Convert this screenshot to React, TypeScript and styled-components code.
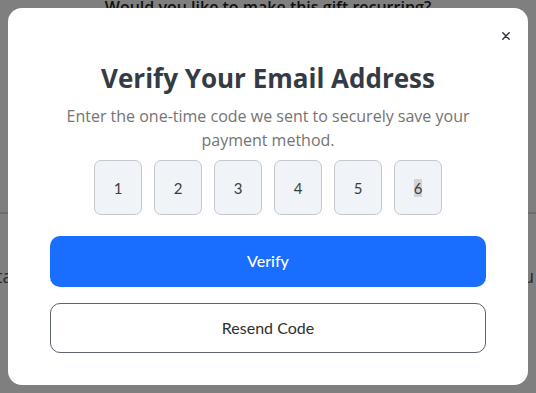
import styled, { createGlobalStyle } from "styled-components";

const GlobalStyle = createGlobalStyle`
  html, body {
    margin: 0;
    padding: 0;
  }
  body {
    font-family: "Open Sans", "Liberation Sans", sans-serif;
    background: #ffffff;
  }
  * {
    box-sizing: border-box;
  }
`;

const codeDigits = ["1", "2", "3", "4", "5", "6"];

const App = () => {
  return (
    <>
      <GlobalStyle />
      <Page>
        <BackHeading>Would you like to make this gift recurring?</BackHeading>
        <BackDivider />
        <BackText>
          <span>ta</span>
          <span>u</span>
        </BackText>
      </Page>
      <Overlay>
        <Modal>
          <CloseButton aria-label="Close">
            <svg width="8" height="8" viewBox="0 0 10 10">
              <path
                d="M1 1 L9 9 M9 1 L1 9"
                stroke="#2f3640"
                strokeWidth="1.8"
                strokeLinecap="round"
              />
            </svg>
          </CloseButton>
          <Title>Verify Your Email Address</Title>
          <Subtitle>
            Enter the one-time code we sent to securely save your payment
            method.
          </Subtitle>
          <CodeRow>
            {codeDigits.map((digit, i) => (
              <CodeBox key={digit}>
                <Digit selected={i === codeDigits.length - 1}>{digit}</Digit>
              </CodeBox>
            ))}
          </CodeRow>
          <Actions>
            <PrimaryButton>Verify</PrimaryButton>
            <SecondaryButton>Resend Code</SecondaryButton>
          </Actions>
        </Modal>
      </Overlay>
    </>
  );
};

export default App;

const Page = styled("div")`
  width: 536px;
  height: 393px;
  overflow: hidden;
  background: #fff;
  display: flex;
  flex-direction: column;
`;

const BackHeading = styled("h2")`
  margin: -3px 0 0;
  text-align: center;
  font-size: 16px;
  font-weight: 600;
  color: #1e1e1e;
  line-height: 20px;
`;

const BackDivider = styled("div")`
  margin-top: 195px;
  height: 2px;
  background: #d8d8d8;
`;

const BackText = styled("div")`
  margin-top: 50px;
  display: flex;
  justify-content: space-between;
  font-size: 18px;
  line-height: 24px;
  color: #555;
  margin-left: -4px;
  margin-right: 2px;
`;

const Overlay = styled("div")`
  position: fixed;
  inset: 0;
  background: rgba(0, 0, 0, 0.5);
  padding: 8px;
`;

const Modal = styled("div")`
  position: relative;
  width: 520px;
  height: 377px;
  background: #fff;
  border-radius: 14px;
  padding: 53px 50px 0;
  display: flex;
  flex-direction: column;
  align-items: center;
`;

const CloseButton = styled("button")`
  position: absolute;
  top: 20px;
  right: 14px;
  width: 16px;
  height: 16px;
  padding: 0;
  border: none;
  background: transparent;
  display: flex;
  align-items: center;
  justify-content: center;
  cursor: pointer;
`;

const Title = styled("h1")`
  margin: 0;
  font-size: 26px;
  font-weight: 700;
  line-height: 34px;
  color: #333b44;
`;

const Subtitle = styled("p")`
  margin: 9px 0 0;
  width: 420px;
  text-align: center;
  font-size: 16px;
  line-height: 24px;
  color: #747474;
`;

const CodeRow = styled("div")`
  margin-top: 8px;
  display: flex;
  gap: 12px;
`;

const CodeBox = styled("div")`
  width: 48px;
  height: 55px;
  border: 1px solid #c6c8cc;
  border-radius: 7px;
  background: #f0f3f8;
  display: flex;
  align-items: center;
  justify-content: center;
`;

const Digit = styled("span")<{ selected?: boolean }>`
  font-family: "Lato", "Liberation Sans", sans-serif;
  font-size: 15px;
  color: #3d3d3d;
  background: ${(p) => (p.selected ? "#d4d4d4" : "transparent")};
`;

const Actions = styled("div")`
  margin-top: 21px;
  width: 436px;
  display: flex;
  flex-direction: column;
  gap: 16px;
`;

const PrimaryButton = styled("button")`
  height: 51px;
  padding-bottom: 3px;
  border: none;
  border-radius: 10px;
  background: #196dff;
  color: #fff;
  font-family: "Lato", "Liberation Sans", sans-serif;
  font-size: 16px;
  font-weight: 500;
  cursor: pointer;
`;

const SecondaryButton = styled("button")`
  height: 50px;
  padding-bottom: 3px;
  border: 1px solid #5d6373;
  border-radius: 10px;
  background: #fff;
  color: #2f2f2f;
  font-family: "Lato", "Liberation Sans", sans-serif;
  font-size: 16px;
  cursor: pointer;
`;
